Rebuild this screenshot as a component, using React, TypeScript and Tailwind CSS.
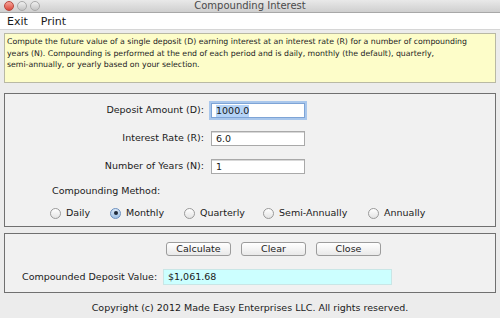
import React from "react";

const font = { fontFamily: '"DejaVu Sans", "Liberation Sans", sans-serif' };

function Radio({ label, checked }: { label: string; checked?: boolean }) {
  return (
    <div className="flex items-center gap-[5px] whitespace-nowrap">
      <span
        className={
          "w-[11px] h-[11px] rounded-full border flex items-center justify-center " +
          (checked
            ? "border-[#6b8fbf] bg-gradient-to-b from-[#d9e8f7] to-[#9fc1e6]"
            : "border-[#9a9a9a] bg-gradient-to-b from-[#ffffff] to-[#e4e4e4]")
        }
      >
        {checked && <span className="w-[4px] h-[4px] rounded-full bg-[#1f2a3a]" />}
      </span>
      <span>{label}</span>
    </div>
  );
}

function Field({ value, focused }: { value: string; focused?: boolean }) {
  return (
    <div
      className={
        "w-[94px] h-[15px] bg-white border flex items-center pl-[4px] " +
        (focused
          ? "border-[#7ea4d6] shadow-[0_0_0_2px_#a9c7ec]"
          : "border-[#a9a9a9] shadow-[inset_0_1px_0_#d8d8d8]")
      }
    >
      {focused ? (
        <span className="bg-[#b4d3f7] leading-[12px]">{value}</span>
      ) : (
        <span className="leading-[12px]">{value}</span>
      )}
    </div>
  );
}

function Button({ label }: { label: string }) {
  return (
    <div className="w-[65px] h-[14px] rounded-[3px] border border-[#9c9c9c] bg-gradient-to-b from-[#ffffff] to-[#e9e9e9] flex items-center justify-center text-[9.5px] text-[#222]">
      {label}
    </div>
  );
}

export default function App() {
  return (
    <div
      className="w-[500px] h-[318px] bg-[#ececec] flex flex-col text-[#1a1a1a] overflow-hidden"
      style={font}
    >
      {/* Title bar */}
      <div className="h-[13px] bg-gradient-to-b from-[#e9e9e9] to-[#cfcfcf] border-b border-[#a8a8a8] relative flex items-center justify-center">
        <div className="absolute left-[4px] top-[1px] flex gap-[3px]">
          <span className="w-[10px] h-[10px] rounded-full bg-gradient-to-b from-[#f6a39a] to-[#d9463a] border border-[#b8463c]" />
          <span className="w-[10px] h-[10px] rounded-full bg-gradient-to-b from-[#f0f0f0] to-[#c4c4c4] border border-[#a9a9a9]" />
          <span className="w-[10px] h-[10px] rounded-full bg-gradient-to-b from-[#f0f0f0] to-[#c4c4c4] border border-[#a9a9a9]" />
        </div>
        <span className="text-[10px] text-[#4a4a4a] leading-none">Compounding Interest</span>
      </div>

      {/* Menu bar */}
      <div className="h-[17px] bg-white border-b border-[#d6d6d6] flex items-center gap-[13px] pl-[7px] text-[11px] leading-none">
        <span>Exit</span>
        <span>Print</span>
      </div>

      <div className="flex flex-col px-[4px]">
        {/* Description */}
        <div className="mt-[3px] h-[50px] bg-[#fdfdc9] border border-[#b9b9a4] px-[2px] pt-[2px] text-[7.8px] leading-[11.5px] text-[#222] whitespace-nowrap">
          Compute the future value of a single deposit (D) earning interest at an interest rate (R) for a number of compounding
          <br />
          years (N). Compounding is performed at the end of each period and is daily, monthly (the default), quarterly,
          <br />
          semi-annually, or yearly based on your selection.
        </div>

        {/* Main panel */}
        <div className="mt-[10px] h-[134px] bg-[#f1f1f1] border border-[#707070] text-[9.5px] flex flex-col pt-[9px]">
          <div className="flex flex-col gap-[13px]">
            <div className="flex items-center">
              <div className="w-[199px] text-right">Deposit Amount (D):</div>
              <div className="ml-[7px]">
                <Field value="1000.0" focused />
              </div>
            </div>
            <div className="flex items-center">
              <div className="w-[199px] text-right">Interest Rate (R):</div>
              <div className="ml-[7px]">
                <Field value="6.0" />
              </div>
            </div>
            <div className="flex items-center">
              <div className="w-[199px] text-right">Number of Years (N):</div>
              <div className="ml-[7px]">
                <Field value="1" />
              </div>
            </div>
          </div>
          <div className="mt-[10px] pl-[47px]">Compounding Method:</div>
          <div className="mt-[8px] flex items-center pl-[45px]">
            <div className="w-[60px]"><Radio label="Daily" /></div>
            <div className="w-[74px]"><Radio label="Monthly" checked /></div>
            <div className="w-[79px]"><Radio label="Quarterly" /></div>
            <div className="w-[105px]"><Radio label="Semi-Annually" /></div>
            <div><Radio label="Annually" /></div>
          </div>
        </div>

        {/* Bottom panel */}
        <div className="mt-[6px] h-[60px] bg-[#f1f1f1] border border-[#707070] text-[9.5px] flex flex-col">
          <div className="mt-[8px] flex items-center gap-[10px] pl-[161px]">
            <Button label="Calculate" />
            <Button label="Clear" />
            <Button label="Close" />
          </div>
          <div className="mt-[13px] flex items-center">
            <div className="w-[158px] pl-[17px] whitespace-nowrap">Compounded Deposit Value:</div>
            <div className="w-[229px] h-[16px] bg-[#ccffff] border border-[#c9e6e6] flex items-center pl-[4px]">
              $1,061.68
            </div>
          </div>
        </div>

        <div className="mt-[8px] text-center text-[9.5px] whitespace-nowrap">
          Copyright (c) 2012 Made Easy Enterprises LLC. All rights reserved.
        </div>
      </div>
    </div>
  );
}
